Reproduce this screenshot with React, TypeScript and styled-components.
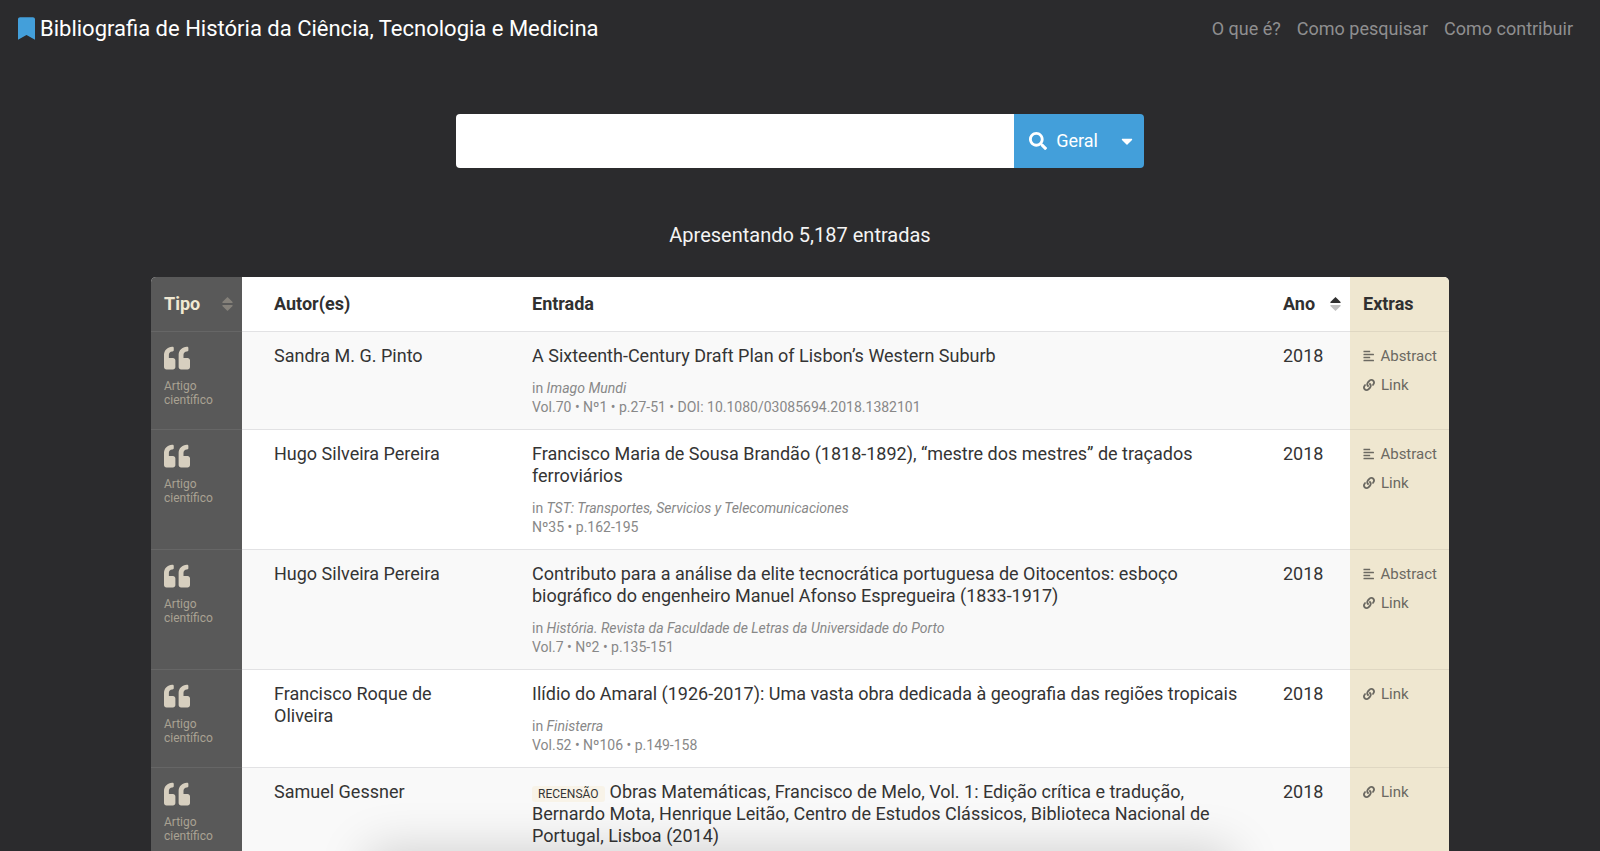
import React from "react";
import styled, { createGlobalStyle } from "styled-components";
import { FaAlignLeft, FaBookmark, FaCaretDown, FaLink, FaQuoteLeft, FaSearch } from "react-icons/fa";

const GlobalStyle = createGlobalStyle`
  * { box-sizing: border-box; }
  body {
    margin: 0;
    background: #2b2b2d;
    color: #343434;
    font-family: Roboto, "Liberation Sans", sans-serif;
    font-size: 18px;
    line-height: 22px;
  }
  button, input { font: inherit; }
  a { color: inherit; text-decoration: none; }
`;

const Page = styled.div`
  min-height: 100vh;
`;

const Header = styled.header`
  display: flex;
  justify-content: space-between;
  align-items: center;
  height: 56px;
  padding: 1px 27px 0 18px;
`;

const Brand = styled.a`
  display: flex;
  align-items: center;
  gap: 5px;
  color: #fff;
  font-size: 22px;
  svg { width: 17px; height: 23px; color: #439fda; }
`;

const Nav = styled.nav`
  display: flex;
  gap: 16px;
  color: #8f8f90;
`;

const SearchForm = styled.form`
  display: flex;
  width: 43%;
  height: 54px;
  margin: 58px auto 55px;
  border-radius: 4px;
  overflow: hidden;
`;

const SearchInput = styled.input`
  flex: 1;
  min-width: 0;
  padding: 0 16px;
  border: 0;
  outline: 0;
  background: #fff;
`;

const SearchButton = styled.button`
  display: flex;
  align-items: center;
  gap: 9px;
  padding: 0 12px 1px 15px;
  border: 0;
  background: #439fda;
  color: #fff;
`;

const ScopeButton = styled(SearchButton)`
  padding: 0 8px 1px;
`;

const Summary = styled.p`
  margin: 0 0 30px;
  color: #f4f4f4;
  font-size: 20px;
  line-height: 24px;
  text-align: center;
`;

const Results = styled.main`
  margin: 0 151px;
  border-radius: 5px 5px 0 0;
  overflow: hidden;
`;

const Table = styled.table`
  width: 100%;
  border-collapse: separate;
  border-spacing: 0;
  table-layout: fixed;
  background: #fff;
`;

type Kind = "type" | "author" | "entry" | "year" | "extras";

const widths: Record<Kind, string> = {
  type: "91px",
  author: "277px",
  entry: "auto",
  year: "80px",
  extras: "99px",
};

const background = (kind: Kind) =>
  kind === "type" ? "#595959" : kind === "extras" ? "#efe7d0" : "transparent";

const HeadCell = styled.th<{ $kind: Kind }>`
  width: ${p => widths[p.$kind]};
  height: 54px;
  padding: 0 9px 0 ${p => (p.$kind === "author" ? "32px" : "13px")};
  background: ${p => background(p.$kind)};
  color: ${p => (p.$kind === "type" ? "#f0e8d2" : "#303030")};
  font-weight: 700;
  text-align: left;
`;

const SortButton = styled.button`
  display: flex;
  justify-content: space-between;
  align-items: center;
  width: 100%;
  padding: 0;
  border: 0;
  background: none;
  color: inherit;
  font-weight: 700;
`;

const Row = styled.tr`
  &:nth-child(odd) { background: #f9f9f9; }
`;

const Cell = styled.td<{ $kind: Kind }>`
  padding: 13px 12px 12px ${p => (p.$kind === "author" ? "32px" : "13px")};
  border-top: 1px solid
    ${p => (p.$kind === "type" ? "#666" : p.$kind === "extras" ? "#dfd7c2" : "#e2e2e4")};
  background: ${p => background(p.$kind)};
  vertical-align: top;
`;

const TypeIcon = styled(FaQuoteLeft)`
  display: block;
  width: 26px;
  height: 26px;
  margin-bottom: 8px;
  color: #d7cfbf;
`;

const TypeLabel = styled.span`
  display: block;
  width: 52px;
  color: #a9a293;
  font-size: 12px;
  line-height: 14px;
`;

const AuthorName = styled.span`
  display: block;
  max-width: 200px;
`;

const Title = styled.div`
  max-width: 712px;
`;

const Source = styled.div`
  margin-top: 12px;
  color: #888;
  font-size: 14px;
  line-height: 19px;
`;

const Badge = styled.span`
  display: inline-block;
  margin-right: 5px;
  padding: 0 6px;
  border-radius: 3px;
  background: #f8f3e8;
  font-size: 12px;
  line-height: 16px;
`;

const ExtraLink = styled.a`
  display: flex;
  align-items: center;
  gap: 6px;
  margin-bottom: 7px;
  color: #6b6962;
  font-size: 15px;
  svg { width: 12px; height: 12px; }
`;

const DockShadow = styled.div`
  position: fixed;
  top: 100%;
  left: 23%;
  right: 23%;
  height: 60px;
  box-shadow: 0 0 50px rgba(0, 0, 0, 0.18);
  pointer-events: none;
`;

function SortIcon({ up, down }: { up: string; down: string }) {
  return (
    <svg width="11" height="14" viewBox="0 0 11 14" aria-hidden="true">
      <path d="M5.5 0 L10.6 5 Q11 6 10 6 H1 Q0 6 .4 5 Z" fill={up} />
      <path d="M5.5 14 L10.6 9 Q11 8 10 8 H1 Q0 8 .4 9 Z" fill={down} />
    </svg>
  );
}

interface Entry {
  author: string;
  title: string;
  badge?: string;
  journal?: string;
  details?: string;
  abstract?: boolean;
}

const entries: Entry[] = [
  {
    author: "Sandra M. G. Pinto",
    title: "A Sixteenth-Century Draft Plan of Lisbon’s Western Suburb",
    journal: "Imago Mundi",
    details: "Vol.70 • Nº1 • p.27-51 • DOI: 10.1080/03085694.2018.1382101",
    abstract: true,
  },
  {
    author: "Hugo Silveira Pereira",
    title: "Francisco Maria de Sousa Brandão (1818-1892), “mestre dos mestres” de traçados ferroviários",
    journal: "TST: Transportes, Servicios y Telecomunicaciones",
    details: "Nº35 • p.162-195",
    abstract: true,
  },
  {
    author: "Hugo Silveira Pereira",
    title:
      "Contributo para a análise da elite tecnocrática portuguesa de Oitocentos: esboço biográfico do engenheiro Manuel Afonso Espregueira (1833-1917)",
    journal: "História. Revista da Faculdade de Letras da Universidade do Porto",
    details: "Vol.7 • Nº2 • p.135-151",
    abstract: true,
  },
  {
    author: "Francisco Roque de Oliveira",
    title: "Ilídio do Amaral (1926-2017): Uma vasta obra dedicada à geografia das regiões tropicais",
    journal: "Finisterra",
    details: "Vol.52 • Nº106 • p.149-158",
  },
  {
    author: "Samuel Gessner",
    badge: "RECENSÃO",
    title:
      "Obras Matemáticas, Francisco de Melo, Vol. 1: Edição crítica e tradução, Bernardo Mota, Henrique Leitão, Centro de Estudos Clássicos, Biblioteca Nacional de Portugal, Lisboa (2014)",
  },
];

export default function App() {
  return (
    <Page>
      <GlobalStyle />
      <Header>
        <Brand href="#">
          <FaBookmark />
          Bibliografia de História da Ciência, Tecnologia e Medicina
        </Brand>
        <Nav>
          <a href="#sobre">O que é?</a>
          <a href="#pesquisar">Como pesquisar</a>
          <a href="#contribuir">Como contribuir</a>
        </Nav>
      </Header>
      <SearchForm role="search" onSubmit={e => e.preventDefault()}>
        <SearchInput type="text" aria-label="Pesquisar" />
        <SearchButton type="submit">
          <FaSearch />
          Geral
        </SearchButton>
        <ScopeButton type="button" aria-label="Escolher campo">
          <FaCaretDown />
        </ScopeButton>
      </SearchForm>
      <Summary>Apresentando 5,187 entradas</Summary>
      <Results>
        <Table>
          <thead>
            <tr>
              <HeadCell $kind="type">
                <SortButton type="button">
                  Tipo
                  <SortIcon up="#85817a" down="#85817a" />
                </SortButton>
              </HeadCell>
              <HeadCell $kind="author">Autor(es)</HeadCell>
              <HeadCell $kind="entry">Entrada</HeadCell>
              <HeadCell $kind="year">
                <SortButton type="button">
                  Ano
                  <SortIcon up="#303030" down="#c0c0c0" />
                </SortButton>
              </HeadCell>
              <HeadCell $kind="extras">Extras</HeadCell>
            </tr>
          </thead>
          <tbody>
            {entries.map(entry => (
              <Row key={entry.title}>
                <Cell $kind="type">
                  <TypeIcon />
                  <TypeLabel>Artigo científico</TypeLabel>
                </Cell>
                <Cell $kind="author">
                  <AuthorName>{entry.author}</AuthorName>
                </Cell>
                <Cell $kind="entry">
                  <Title>
                    {entry.badge && <Badge>{entry.badge}</Badge>}
                    {entry.title}
                  </Title>
                  {entry.journal && (
                    <Source>
                      in <em>{entry.journal}</em>
                      <br />
                      {entry.details}
                    </Source>
                  )}
                </Cell>
                <Cell $kind="year">2018</Cell>
                <Cell $kind="extras">
                  {entry.abstract && (
                    <ExtraLink href="#abstract">
                      <FaAlignLeft />
                      Abstract
                    </ExtraLink>
                  )}
                  <ExtraLink href="#link">
                    <FaLink />
                    Link
                  </ExtraLink>
                </Cell>
              </Row>
            ))}
          </tbody>
        </Table>
      </Results>
      <DockShadow />
    </Page>
  );
}
